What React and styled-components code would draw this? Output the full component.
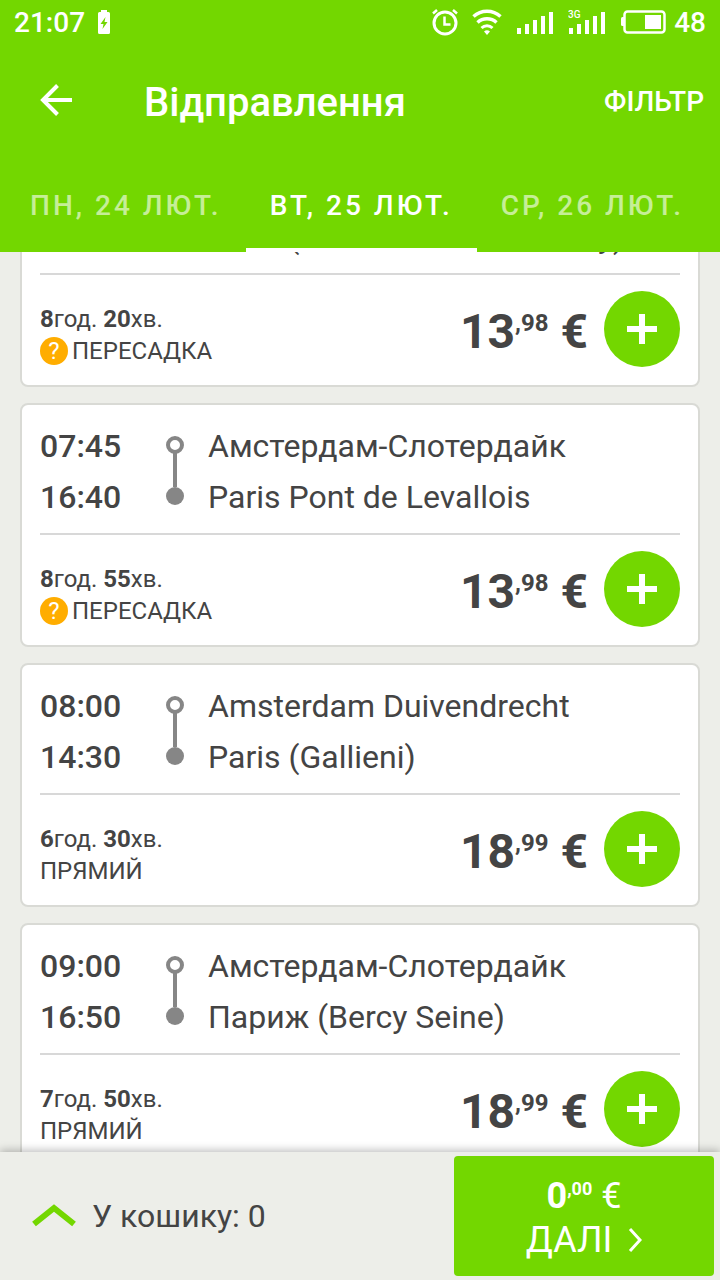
import React from "react";
import styled, { createGlobalStyle } from "styled-components";

const DAYS = [
  { id: "mon", label: "ПН, 24 ЛЮТ." },
  { id: "tue", label: "ВТ, 25 ЛЮТ." },
  { id: "wed", label: "СР, 26 ЛЮТ." },
];

const TRIPS = [
  {
    id: 1,
    departure: { time: "07:30", stop: "Амстердам-Слотердайк" },
    arrival: { time: "15:50", stop: "Paris (Marne Vallée - Chessy)" },
    hours: 8,
    minutes: 20,
    transfer: true,
    price: ["13", "98"],
  },
  {
    id: 2,
    departure: { time: "07:45", stop: "Амстердам-Слотердайк" },
    arrival: { time: "16:40", stop: "Paris Pont de Levallois" },
    hours: 8,
    minutes: 55,
    transfer: true,
    price: ["13", "98"],
  },
  {
    id: 3,
    departure: { time: "08:00", stop: "Amsterdam Duivendrecht" },
    arrival: { time: "14:30", stop: "Paris (Gallieni)" },
    hours: 6,
    minutes: 30,
    transfer: false,
    price: ["18", "99"],
  },
  {
    id: 4,
    departure: { time: "09:00", stop: "Амстердам-Слотердайк" },
    arrival: { time: "16:50", stop: "Париж (Bercy Seine)" },
    hours: 7,
    minutes: 50,
    transfer: false,
    price: ["18", "99"],
  },
];

const INITIAL_SCROLL = 125;

const StatusBar = () => (
  <Status>
    <StatusText>21:07</StatusText>
    <svg width="14" height="26" viewBox="0 0 14 26" fill="#fff">
      <path d="M4 1h6v2h1.500a1.500 1.500 0 0 1 1.500 1.500v19a1.500 1.500 0 0 1-1.500 1.500h-9A1.500 1.500 0 0 1 1 23.500v-19A1.500 1.500 0 0 1 2.500 3H4z" />
      <path d="M8.500 8 3.500 15h3l-1 5 5-7h-3z" fill="#73d700" />
    </svg>
    <StatusIcons>
      <svg width="26" height="28" viewBox="0 0 26 28" fill="none" stroke="#fff">
        <circle cx="13" cy="15" r="11" strokeWidth="3" />
        <path d="M12.500 8.500v8h6" strokeWidth="2.500" />
        <path d="M1 5.500 5 2M25 5.500 21 2" strokeWidth="2.500" />
      </svg>
      <svg width="30" height="28" viewBox="0 0 30 28" fill="none" stroke="#fff">
        <path d="M1.500 8.500a20 20 0 0 1 27 0" strokeWidth="3.500" />
        <path d="M5.500 14.500a14 14 0 0 1 19 0" strokeWidth="3.500" />
        <path d="M9.500 20a8 8 0 0 1 11 0" strokeWidth="3" />
        <path d="M12 23.500a4.500 4.500 0 0 1 6 0L15 27z" fill="#fff" stroke="none" />
      </svg>
      <SignalBars />
      <SignalBars network="3G" />
      <Battery>
        <svg width="46" height="26" viewBox="0 0 46 26">
          <rect x="4.500" y="2.500" width="40" height="21" rx="3" fill="none" stroke="#fff" strokeWidth="2.500" />
          <rect x="1" y="8" width="4" height="9" rx="1.500" fill="#fff" />
          <rect x="25" y="6" width="16" height="14" fill="#fff" />
        </svg>
        <StatusText>48</StatusText>
      </Battery>
    </StatusIcons>
  </Status>
);

const SignalBars = ({ network }) => (
  <svg width="38" height="28" viewBox="0 0 38 28" fill="#fff">
    {[6, 10, 14, 18, 22].map((height, i) => (
      <rect key={height} x={1 + i * 8} y={26 - height} width="4" height={height} />
    ))}
    {network && (
      <text x="0" y="10" fontSize="10" fontWeight="500">
        {network}
      </text>
    )}
  </svg>
);

const Route = () => (
  <RouteLine width="20" height="70" viewBox="0 0 20 70" fill="none" stroke="#868686">
    <path d="M10 18v34" strokeWidth="4" />
    <circle cx="10" cy="10" r="7" strokeWidth="4" fill="#fff" />
    <circle cx="10" cy="61" r="9" fill="#868686" stroke="none" />
  </RouteLine>
);

const Trip = ({ trip, onAdd }) => (
  <Card>
    <Stops>
      <Times>
        <time>{trip.departure.time}</time>
        <time>{trip.arrival.time}</time>
      </Times>
      <Route />
      <Names>
        <span>{trip.departure.stop}</span>
        <span>{trip.arrival.stop}</span>
      </Names>
    </Stops>
    <Details>
      <Info>
        <div>
          <b>{trip.hours}</b>год. <b>{trip.minutes}</b>хв.
        </div>
        {trip.transfer ? (
          <Kind>
            <Hint type="button">?</Hint>
            ПЕРЕСАДКА
          </Kind>
        ) : (
          <Kind>ПРЯМИЙ</Kind>
        )}
      </Info>
      <Price>
        {trip.price[0]}
        <sup>,{trip.price[1]}</sup> €
      </Price>
      <AddButton type="button" aria-label="Додати" onClick={onAdd}>
        <svg width="30" height="30" viewBox="0 0 30 30" fill="none" stroke="#fff" strokeWidth="6">
          <path d="M15 0v30M0 15h30" />
        </svg>
      </AddButton>
    </Details>
  </Card>
);

const App = () => {
  const [day, setDay] = React.useState("tue");
  const [count, setCount] = React.useState(0);
  const listRef = React.useRef(null);

  React.useLayoutEffect(() => {
    listRef.current.scrollTop = INITIAL_SCROLL;
  }, []);

  return (
    <Screen>
      <GlobalStyle />
      <Header>
        <StatusBar />
        <Toolbar>
          <IconButton type="button" aria-label="Назад">
            <svg width="32" height="32" viewBox="0 0 32 32" fill="none" stroke="#fff" strokeWidth="4">
              <path d="M32 16H3M17.500 1.500 3 16l14.500 14.500" />
            </svg>
          </IconButton>
          <Title>Відправлення</Title>
          <FilterButton type="button">ФІЛЬТР</FilterButton>
        </Toolbar>
        <Tabs role="tablist">
          {DAYS.map(({ id, label }) => (
            <Tab
              key={id}
              type="button"
              role="tab"
              aria-selected={day === id}
              $active={day === id}
              onClick={() => setDay(id)}
            >
              {label}
            </Tab>
          ))}
        </Tabs>
      </Header>
      <List ref={listRef}>
        {TRIPS.map((trip) => (
          <Trip key={trip.id} trip={trip} onAdd={() => setCount(count + 1)} />
        ))}
      </List>
      <Footer>
        <CartButton type="button">
          <svg width="44" height="26" viewBox="0 0 44 26" fill="none" stroke="#73d700" strokeWidth="6">
            <path d="M2 21 22 5l20 16" />
          </svg>
          У кошику: {count}
        </CartButton>
        <NextButton type="button">
          <Total>
            <b>0</b>
            <sup>,00</sup> €
          </Total>
          <Next>
            ДАЛІ
            <svg width="14" height="26" viewBox="0 0 14 26" fill="none" stroke="#fff" strokeWidth="3">
              <path d="m2 2 10 11L2 24" />
            </svg>
          </Next>
        </NextButton>
      </Footer>
    </Screen>
  );
};

const GlobalStyle = createGlobalStyle`
  * {
    box-sizing: border-box;
  }
  body {
    margin: 0;
    background: #edeee9;
    color: #444444;
    font-family: Roboto, sans-serif;
  }
  button {
    padding: 0;
    border: none;
    background: none;
    color: inherit;
    font: inherit;
    cursor: pointer;
  }
  svg {
    display: block;
    flex-shrink: 0;
  }
`;

const Screen = styled.div`
  height: 100vh;
  display: flex;
  flex-direction: column;
`;

const Header = styled.header`
  background: #73d700;
  color: #ffffff;
`;

const Status = styled.div`
  display: flex;
  align-items: center;
  gap: 12px;
  height: 44px;
  padding: 0 14px;
`;

const StatusText = styled.span`
  font-size: 28px;
  font-weight: 500;
`;

const StatusIcons = styled.div`
  display: flex;
  align-items: center;
  gap: 14px;
  margin-left: auto;
`;

const Battery = styled.div`
  display: flex;
  align-items: center;
  gap: 8px;
`;

const Toolbar = styled.div`
  display: flex;
  align-items: center;
  height: 112px;
  padding: 0 16px 0 40px;
`;

const IconButton = styled.button`
  margin-right: 72px;
`;

const Title = styled.h1`
  flex: 1;
  margin: 0;
  padding-top: 4px;
  font-size: 40px;
  font-weight: 500;
`;

const FilterButton = styled.button`
  padding-top: 2px;
  font-size: 28px;
  font-weight: 500;
`;

const Tabs = styled.div`
  display: flex;
  height: 96px;
  padding: 0 6px;
`;

const Tab = styled.button`
  padding: 6px 24px 0;
  border-bottom: 4px solid ${({ $active }) => ($active ? "#ffffff" : "transparent")};
  color: ${({ $active }) => ($active ? "#ffffff" : "rgba(255, 255, 255, 0.6)")};
  font-size: 28px;
  font-weight: 500;
  letter-spacing: 3px;
  white-space: nowrap;
`;

const List = styled.main`
  flex: 1;
  min-height: 0;
  display: flex;
  flex-direction: column;
  gap: 16px;
  padding: 16px 20px;
  overflow-y: auto;
  scrollbar-width: none;
`;

const Card = styled.article`
  flex-shrink: 0;
  padding: 16px 18px 18px;
  background: #ffffff;
  border: 2px solid #d9dad5;
  border-radius: 8px;
`;

const Stops = styled.div`
  display: flex;
  align-items: center;
  padding-bottom: 10px;
  border-bottom: 2px solid #d8d8d8;
  font-size: 32px;
  line-height: 51px;
`;

const Times = styled.div`
  display: flex;
  flex-direction: column;
  width: 125px;
  font-weight: 500;
`;

const RouteLine = styled.svg`
  margin-bottom: 4px;
`;

const Names = styled.div`
  display: flex;
  flex-direction: column;
  margin-left: 23px;
`;

const Details = styled.div`
  display: flex;
  align-items: center;
  padding-top: 16px;
`;

const Info = styled.div`
  flex: 1;
  padding-top: 12px;
  font-size: 24px;
  line-height: 32px;
`;

const Kind = styled.div`
  display: flex;
  align-items: center;
  gap: 4px;
`;

const Hint = styled.button`
  width: 28px;
  height: 28px;
  border-radius: 50%;
  background: #ffad00;
  color: #ffffff;
  line-height: 28px;
`;

const Price = styled.div`
  padding-top: 6px;
  font-size: 48px;
  font-weight: 700;
  line-height: 56px;

  sup {
    font-size: 24px;
    line-height: 24px;
  }
`;

const AddButton = styled.button`
  display: flex;
  align-items: center;
  justify-content: center;
  width: 76px;
  height: 76px;
  margin-left: 16px;
  border-radius: 50%;
  background: #73d700;
`;

const Footer = styled.footer`
  display: flex;
  height: 128px;
  padding: 4px 6px 4px 32px;
  background: #edeee9;
  box-shadow: 0 -2px 8px rgba(0, 0, 0, 0.25);
  z-index: 1;
`;

const CartButton = styled.button`
  flex: 1;
  display: flex;
  align-items: center;
  gap: 16px;
  font-size: 32px;
`;

const NextButton = styled.button`
  width: 260px;
  padding-top: 4px;
  border-radius: 4px;
  background: #73d700;
  color: #ffffff;
  font-size: 36px;
  line-height: 44px;
`;

const Total = styled.div`
  sup {
    font-size: 18px;
    font-weight: 700;
    line-height: 18px;
  }
`;

const Next = styled.div`
  display: flex;
  align-items: center;
  justify-content: center;
  gap: 16px;
`;

export default App;
